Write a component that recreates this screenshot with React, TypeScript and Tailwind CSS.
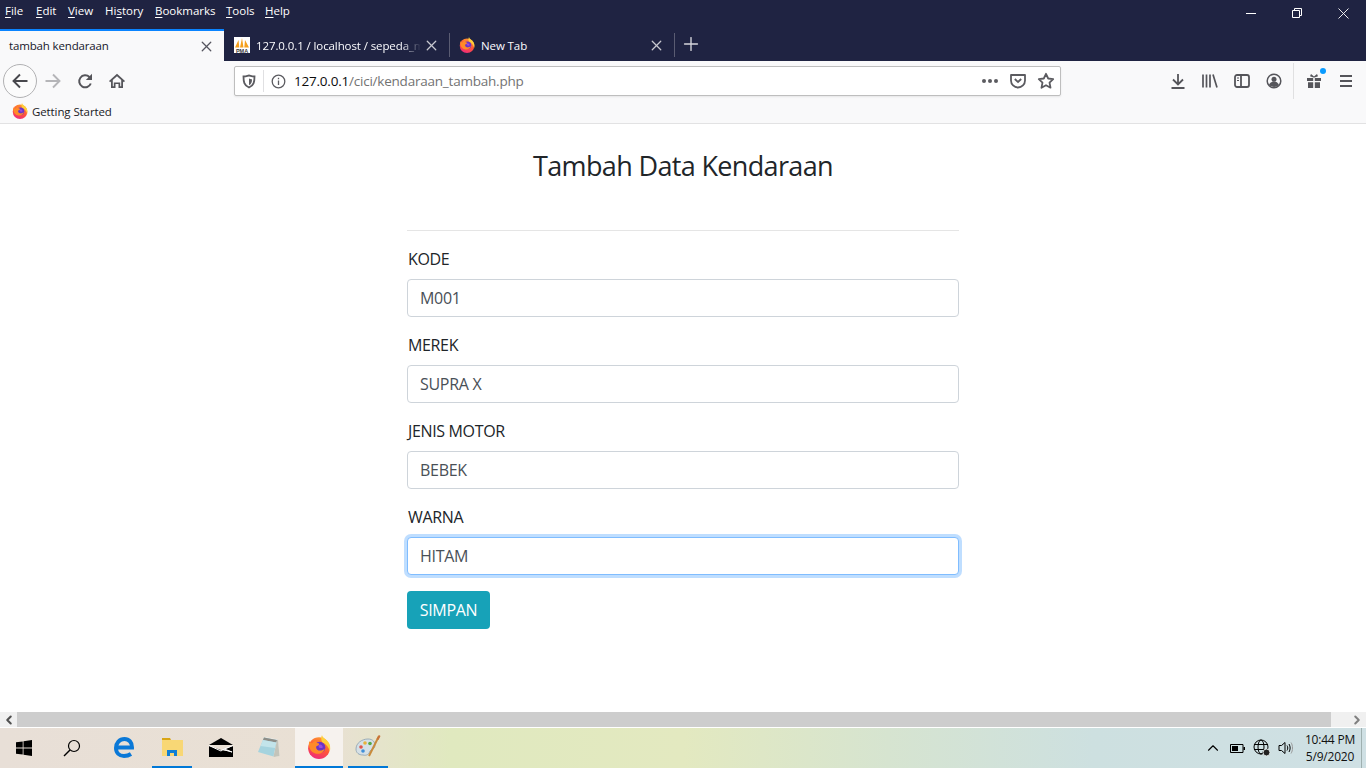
import { ChevronLeft, ChevronRight, ChevronUp, X, Plus } from 'lucide-react';

const menus = [
  { first: 'F', rest: 'ile', w: 'w-[31px]' },
  { first: 'E', rest: 'dit', w: 'w-[32px]' },
  { first: 'V', rest: 'iew', w: 'w-[37px]' },
  { first: '', rest: 'History', w: 'w-[50px]' },
  { first: 'B', rest: 'ookmarks', w: 'w-[71px]' },
  { first: 'T', rest: 'ools', w: 'w-[39px]' },
  { first: 'H', rest: 'elp', w: 'w-[30px]' },
];

const fields = [
  { label: 'KODE', value: 'M001' },
  { label: 'MEREK', value: 'SUPRA X' },
  { label: 'JENIS MOTOR', value: 'BEBEK' },
  { label: 'WARNA', value: 'HITAM', focused: true },
];

function FirefoxLogo({ size = 16 }: { size?: number }) {
  return (
    <svg width={size} height={size} viewBox="0 0 32 32">
      <defs>
        <linearGradient id="ffBody" x1="0.75" y1="0" x2="0.35" y2="1">
          <stop offset="0" stopColor="#ff9a2e" />
          <stop offset="0.55" stopColor="#ff5638" />
          <stop offset="1" stopColor="#ee2a7b" />
        </linearGradient>
      </defs>
      <circle cx="16" cy="17.500" r="14.500" fill="url(#ffBody)" />
      <path d="M20 0c.5 3.500 5 5 8 9 3 3.500 3.500 8 2.500 13-1.500-6-4.500-9.500-10-12-2-3.500-2-7-.5-10z" fill="#ffcf3a" />
      <circle cx="17" cy="16.500" r="7.500" fill="#6a35c7" />
      <path d="M3 8c1 2 2.500 3 4 3 1-1.500 3-3 5-3.500-.5 2 1 3 3 3.500 1.500.5 1.500 1.500.5 2.500l-3 1.500c-1 2 0 4.500 3 5.500 3 .8 6-.2 8-2.500-1 5.500-7 8.500-12.500 6.500C5.500 23.500 1 16 3 8z" fill="#ff8a28" />
      <path d="M17 12.500c2.500 0 4.500 2 3.800 4.500-1 .5-3.300.5-4.800-.5-1-1.500-.5-3.500 1-4z" fill="#9a4de0" />
    </svg>
  );
}

function PmaLogo() {
  return (
    <svg width="16" height="16" viewBox="0 0 16 16">
      <rect width="16" height="16" fill="#fff" />
      <path d="M1 10.500 4.500 3l.8 7.500zM6 10.500 8 1l1.500 9.500zM10.300 10.500 11 3l4 7.500z" fill="#f5a01c" />
      <text x="8" y="15.500" textAnchor="middle" fontSize="5.500" fontWeight="700" fill="#3a3a3a" fontFamily="Liberation Sans, sans-serif">PMA</text>
    </svg>
  );
}

function Tool({ className = '', children }: { className?: string; children: React.ReactNode }) {
  return <div className={`flex h-[32px] w-[32px] items-center justify-center ${className}`}>{children}</div>;
}

function TitleBar() {
  return (
    <div className="flex h-[29px] items-start bg-[#1f2342] pl-[1px] text-white">
      <div className="flex h-[21px] items-center text-[11.5px]">
        {menus.map(m => (
          <div key={m.rest} className={`${m.w} pl-[4px] leading-none whitespace-nowrap`}>
            {m.first && <span className="underline underline-offset-2">{m.first}</span>}
            {m.rest === 'History' ? (
              <>
                Hi<span className="underline underline-offset-2">s</span>tory
              </>
            ) : (
              m.rest
            )}
          </div>
        ))}
      </div>
      <div className="ml-auto flex h-[29px] items-center">
        <div className="flex w-[46px] justify-center pb-[3px]">
          <div className="h-[1px] w-[10px] bg-white" />
        </div>
        <div className="flex w-[46px] justify-center pb-[3px]">
          <svg width="10" height="10" viewBox="0 0 10 10" fill="none" stroke="#fff">
            <path d="M.5 2.500h7v7h-7zM2.500 2.500v-2h7v7h-2" />
          </svg>
        </div>
        <div className="flex w-[46px] justify-center pb-[3px]">
          <svg width="11" height="11" viewBox="0 0 11 11" stroke="#fff" strokeWidth="0.9">
            <path d="M.5.500l10 10M10.500.500l-10 10" />
          </svg>
        </div>
      </div>
    </div>
  );
}

function TabStrip() {
  return (
    <div className="flex h-[32px] bg-[#1f2342] text-[11.5px]">
      <div className="flex w-[224px] items-center justify-between border-t-2 border-[#0a84ff] bg-[#f9f9fa] pr-[9px] pl-[9px] text-[#17172b]">
        <span className="tracking-[-0.15px] whitespace-nowrap">tambah kendaraan</span>
        <X size={17} strokeWidth={1.800} className="text-[#55555f]" />
      </div>
      <div className="flex w-[225px] items-center pr-[9px] pl-[10px] text-[#fbfbfe]">
        <PmaLogo />
        <span className="mt-[2px] ml-[6px] w-[165px] tracking-[-0.1px] whitespace-nowrap [mask-image:linear-gradient(90deg,#000_88%,transparent)]">
          127.0.0.1 / localhost / sepeda_m
        </span>
        <X size={17} strokeWidth={1.800} className="ml-auto text-[#c8c8d0]" />
      </div>
      <div className="my-[4px] w-[1px] bg-[#5a5c72]" />
      <div className="flex w-[224px] items-center pr-[9px] pl-[9px] text-[#fbfbfe]">
        <FirefoxLogo />
        <span className="mt-[2px] ml-[6px] tracking-[-0.1px]">New Tab</span>
        <X size={17} strokeWidth={1.800} className="ml-auto text-[#c8c8d0]" />
      </div>
      <div className="my-[4px] w-[1px] bg-[#5a5c72]" />
      <div className="flex w-[32px] items-center justify-center pb-[2px]">
        <Plus size={22} strokeWidth={1.500} className="text-[#d6d6dc]" />
      </div>
    </div>
  );
}

function NavBar() {
  return (
    <div className="flex h-[40px] items-center bg-[#f9f9fa] pl-[3px] text-[#55555a]">
      <div className="flex h-[34px] w-[34px] items-center justify-center rounded-full border border-[#b1b1b3] bg-[#fbfbfb]">
        <svg width="18" height="18" viewBox="0 0 18 18" fill="none" stroke="#48484d" strokeWidth="1.900">
          <path d="M16.500 9H2.500M9 2.500 2.500 9 9 15.500" />
        </svg>
      </div>
      <div className="flex w-[32px] justify-center">
        <svg width="18" height="18" viewBox="0 0 18 18" fill="none" stroke="#b5b5b8" strokeWidth="1.900">
          <path d="M1.500 9h14M9 2.500 15.500 9 9 15.500" />
        </svg>
      </div>
      <Tool>
        <svg width="16" height="16" viewBox="0 0 16 16" fill="none" stroke="#55555a" strokeWidth="2">
          <path d="M13.800 10.500A6 6 0 1 1 12.400 4l1.600 1.400" />
          <path d="M15 .8v6.200H8.800z" fill="#55555a" stroke="none" />
        </svg>
      </Tool>
      <Tool>
        <svg width="16" height="16" viewBox="0 0 16 16" fill="#55555a">
          <path d="M8 .8 0 8l1.200 1.300L2 8.600V15h4.500v-4h3v4H14V8.600l.8.700L16 8zM12.200 13.300H11.200V9.500H4.800v3.800h-1V7L8 3.300 12.200 7z" />
        </svg>
      </Tool>
      <div className="ml-[101px] flex h-[30px] w-[827px] items-center rounded-[2px] border border-[#bebebe] bg-white shadow-[0_1px_2px_rgba(0,0,0,0.08)]">
        <div className="flex w-[28px] justify-center">
          <svg width="14" height="15" viewBox="0 0 14 15" fill="none" stroke="#5b5b60" strokeWidth="1.800">
            <path d="M1.500 2.500c3.500 0 4-1 5.500-1s2 1 5.500 1c0 5-.5 9-5.500 11C2 11.500 1.500 7.500 1.500 2.500z" />
            <path d="M7 4.500c1 .6 1.700.7 3 .8 0 2.700-.5 4.800-3 6z" fill="#5b5b60" stroke="none" />
          </svg>
        </div>
        <div className="h-[22px] w-[1px] bg-[#e0e0e2]" />
        <div className="flex w-[29px] justify-center">
          <svg width="15" height="15" viewBox="0 0 15 15" fill="none" stroke="#5b5b60" strokeWidth="1.300">
            <circle cx="7.500" cy="7.500" r="6.300" />
            <path d="M7.500 6.500v4.500M7.500 3.800v1.500" />
          </svg>
        </div>
        <div className="ml-[1px] text-[13.5px] tracking-[-0.22px] whitespace-nowrap">
          <span className="text-[#0c0c0d]">127.0.0.1</span>
          <span className="text-[#737373]">/cici/kendaraan_tambah.php</span>
        </div>
        <div className="ml-auto flex items-center pr-[5px]">
          <div className="mr-[12px] flex gap-[2px]">
            <div className="h-[4px] w-[4px] rounded-full bg-[#5b5b60]" />
            <div className="h-[4px] w-[4px] rounded-full bg-[#5b5b60]" />
            <div className="h-[4px] w-[4px] rounded-full bg-[#5b5b60]" />
          </div>
          <svg width="16" height="16" viewBox="0 0 16 16" fill="none" stroke="#5b5b60" strokeWidth="1.800">
            <path d="M1 2h14v5.500a7 7 0 0 1-14 0z" strokeLinejoin="round" />
            <path d="m4.800 6 3.200 3 3.200-3" />
          </svg>
          <svg width="18" height="18" viewBox="0 0 18 18" fill="none" stroke="#5b5b60" strokeWidth="1.800" className="ml-[11px]">
            <path d="m9 1.800 2.200 4.700 5 .6-3.700 3.500 1 5.100L9 13.200l-4.500 2.500 1-5.100L1.800 7.100l5-.6z" strokeLinejoin="round" />
          </svg>
        </div>
      </div>
      <div className="ml-[101px] flex items-center">
        <Tool>
          <svg width="16" height="16" viewBox="0 0 16 16" fill="none" stroke="#55555a" strokeWidth="1.800">
            <path d="M8 1v10M3 6.500l5 5 5-5M1.500 15h13" />
          </svg>
        </Tool>
        <Tool>
          <svg width="16" height="14" viewBox="0 0 16 14" fill="none" stroke="#55555a" strokeWidth="1.700">
            <path d="M1 .5v13M4.500.5v13M8 .5v13M11 .5l4 13" />
          </svg>
        </Tool>
        <Tool>
          <svg width="16" height="14" viewBox="0 0 16 14" fill="none" stroke="#55555a" strokeWidth="1.800">
            <rect x="1" y="1" width="14" height="12" rx="2" />
            <path d="M7 1v12" />
            <path d="M3 4h2M3 6.500h2" strokeWidth="1.200" />
          </svg>
        </Tool>
        <Tool>
          <svg width="16" height="16" viewBox="0 0 16 16" fill="none" stroke="#55555a" strokeWidth="1.500">
            <circle cx="8" cy="8" r="6.800" />
            <circle cx="8" cy="6.300" r="2.500" fill="#55555a" stroke="none" />
            <path d="M3 12c1-2.500 3-3.500 5-3.500s4 1 5 3.500c-2.500 2.500-7.500 2.500-10 0z" fill="#55555a" stroke="none" />
          </svg>
        </Tool>
        <div className="ml-[3px] h-[36px] w-[1px] bg-[#e0e0e1]" />
        <Tool className="relative ml-[4px]">
          <svg width="14" height="16" viewBox="0 0 14 16" fill="#55555a">
            <path d="M4 1 7 3.500 10 1l1 2.200-3.400 1.300H6.400L3 3.200zM0 5h6.200v3H0zM7.800 5H14v3H7.800zM1 9.300h5.200V15H1zM7.800 9.300H13V15H7.800z" />
          </svg>
          <div className="absolute top-[3px] right-[4px] h-[6px] w-[6px] rounded-full bg-[#0a9bff]" />
        </Tool>
        <Tool>
          <svg width="14" height="12" viewBox="0 0 14 12" stroke="#55555a" strokeWidth="1.800">
            <path d="M1 1h12M1 6h12M1 11h12" />
          </svg>
        </Tool>
      </div>
    </div>
  );
}

function BookmarkBar() {
  return (
    <div className="flex h-[23px] items-start border-b border-[#e2e2e3] bg-[#f9f9fa] pt-[2px] pl-[12px] text-[11.5px] text-[#1a1a1f]">
      <FirefoxLogo />
      <span className="ml-[4px] tracking-[-0.1px]">Getting Started</span>
    </div>
  );
}

function Field({ label, value, focused }: { label: string; value: string; focused?: boolean }) {
  return (
    <div className="mb-[16px]">
      <label className="mb-[8px] block pl-[1px] text-[16px] leading-[24px] tracking-[-0.35px] text-[#212529]">{label}</label>
      <div
        className={`flex h-[38px] items-center rounded-[4px] border bg-white px-[12px] text-[16px] tracking-[-0.3px] text-[#495057] ${
          focused ? 'border-[#80bdff] shadow-[0_0_0_3px_rgba(0,123,255,0.25)]' : 'border-[#ced4da]'
        }`}
      >
        {value}
      </div>
    </div>
  );
}

function TambahForm() {
  return (
    <div className="flex-1 overflow-hidden bg-white">
      <div className="mx-auto w-[552px]">
        <h3 className="mt-[25px] mb-[47px] text-center text-[27px] leading-[34px] tracking-[-0.65px] text-[#212529]">Tambah Data Kendaraan</h3>
        <div className="mb-[16px] h-[1px] bg-[#e5e5e5]" />
        {fields.map(f => (
          <Field key={f.label} {...f} />
        ))}
        <button className="flex h-[38px] w-[83px] items-center justify-center rounded-[4px] bg-[#17a2b8] text-[16px] tracking-[-0.35px] text-white">
          SIMPAN
        </button>
      </div>
    </div>
  );
}

function ScrollBar() {
  return (
    <div className="flex h-[16px] border-b border-white bg-[#cdcdcd]">
      <div className="flex w-[17px] items-center justify-center bg-[#f0f0f0]">
        <ChevronLeft size={14} strokeWidth={3.500} className="text-[#505050]" />
      </div>
      <div className="flex-1" />
      <div className="flex w-[35px] items-center justify-end bg-[#f0f0f0] pr-[2px]">
        <ChevronRight size={14} strokeWidth={3.500} className="text-[#808080]" />
      </div>
    </div>
  );
}

function TaskIcon({ w, active, lit, children }: { w: string; active?: boolean; lit?: boolean; children: React.ReactNode }) {
  return (
    <div className={`flex h-[40px] items-center justify-center border-b-2 ${w} ${active ? 'border-[#0078d7]' : 'border-transparent'} ${lit ? 'bg-[#f6f2ee]' : ''}`}>
      {children}
    </div>
  );
}

function TaskBar() {
  return (
    <div className="flex h-[40px] items-center bg-[linear-gradient(90deg,#e8dfd7_0%,#e9e0d4_24%,#e0e9bf_33%,#e3e9c0_50%,#d6e4d0_65%,#cde0e0_80%,#cfe0e4_100%)]">
      <div className="flex w-[48px] justify-center">
        <svg width="16" height="16" viewBox="0 0 16 16" fill="#000">
          <path d="M0 2.300 6.700 1.400v6.100H0zM7.500 1.300 16 0v7.500H7.500zM0 8.400h6.700v6.200L0 13.700zM7.500 8.400H16V16l-8.500-1.200z" />
        </svg>
      </div>
      <div className="flex w-[48px] justify-center">
        <svg width="18" height="18" viewBox="0 0 18 18" fill="none" stroke="#000" strokeWidth="1.200">
          <circle cx="11" cy="7" r="5.500" />
          <path d="M7 11 1 17" strokeWidth="1.500" />
        </svg>
      </div>
      <TaskIcon w="ml-[8px] w-[40px]">
        <svg width="22" height="22" viewBox="0 0 22 22" fill="none" stroke="#0a78d7" strokeWidth="4">
          <path d="M3 11.500h16c.2-5-3-8.500-7.500-8.500C6.500 3 3 7 3 12c0 5 3.500 8 8 8 3 0 5-.7 7-2" />
        </svg>
      </TaskIcon>
      <TaskIcon w="ml-[8px] w-[40px]" active>
        <svg width="22" height="20" viewBox="0 0 22 20">
          <path d="M1 1h8l1 2H1z" fill="#d9a514" />
          <path d="M1 3h21v16H1z" fill="#f8d775" />
          <path d="M6 19v-6h10v6h-3v-3H9v3z" fill="#0f7fd6" />
        </svg>
      </TaskIcon>
      <TaskIcon w="ml-[9px] w-[40px]">
        <svg width="24" height="19" viewBox="0 0 24 19" fill="#000">
          <path d="M0 7 12 0l12 7z" />
          <path d="M0 8v11h24V8L15 11.500 24 14 12 12z" />
          <path d="M0 7.500 12 13l2-1.500 9 2.500-7.500-3L24 7.500" fill="none" stroke="#fff" strokeWidth="1" />
        </svg>
      </TaskIcon>
      <TaskIcon w="ml-[8px] w-[40px]">
        <svg width="24" height="23" viewBox="0 0 24 23">
          <path d="M7.500 1 21 3.500 22.500 20 17 21z" fill="#f0f0ec" />
          <path d="M7 1.500 20 4l-3.500 16.500L1 16z" fill="#a5d3de" />
          <path d="M7 1.500 20 4l-.7 2.500L6 4z" fill="#8e8e88" />
          <path d="M6 4 19.300 6.500 18 12 3.500 10z" fill="#c3e4ea" />
          <path d="M17 21l5.500-1L21 3.500l-1 .5-3.500 16.500z" fill="#c4c4ba" />
        </svg>
      </TaskIcon>
      <TaskIcon w="ml-[6px] w-[48px]" active lit>
        <FirefoxLogo size={24} />
      </TaskIcon>
      <TaskIcon w="ml-[5px] w-[40px]" active>
        <svg width="26" height="24" viewBox="0 0 26 24">
          <path d="M1 14C1 8 7 4 13 4c5 0 7 3 7 7 0 3-4 3-5 5-1 3-3 5-7 4-4 0-7-2-7-6z" fill="#d5e0e6" stroke="#8aa0ae" strokeWidth="0.800" />
          <circle cx="6" cy="12" r="1.800" fill="#e0534a" />
          <circle cx="10" cy="8" r="1.800" fill="#e8b23a" />
          <circle cx="15" cy="8.500" r="1.800" fill="#55a845" />
          <circle cx="8" cy="16" r="1.800" fill="#3f8fd8" />
          <path d="M24 1 14 21" stroke="#c88a3a" strokeWidth="2" />
          <path d="M24 0l1.500 1-2 4-2-1z" fill="#c9733a" />
        </svg>
      </TaskIcon>
      <div className="ml-auto flex items-center">
        <ChevronUp size={18} strokeWidth={1.500} className="text-black" />
        <svg width="15" height="9" viewBox="0 0 15 9" className="ml-[8px]">
          <path d="M.5.500h12.500v8H.5z" fill="none" stroke="#000" />
          <path d="M2 2h6v5H2z" fill="#000" />
          <path d="M13.500 3H15v3h-1.500z" fill="#000" />
        </svg>
        <svg width="18" height="18" viewBox="0 0 18 18" fill="none" stroke="#000" strokeWidth="1" className="ml-[8px]">
          <circle cx="8" cy="8" r="7" />
          <ellipse cx="8" cy="8" rx="3" ry="7" />
          <path d="M1 5.500h14M1 10.500h14" />
          <circle cx="13.500" cy="13.500" r="3.500" fill="#222" stroke="#e0e8e8" />
        </svg>
        <svg width="16" height="14" viewBox="0 0 16 14" fill="none" stroke="#000" strokeWidth="1" className="ml-[7px]">
          <path d="M1 4.500h2.500L7 1.500v11l-3.500-3H1z" />
          <path d="M9 4.500c1 1.500 1 3.500 0 5M11 3c1.500 2.500 1.500 5.500 0 8" />
          <path d="M13 1.500c2 3 2 8 0 11" stroke="#999" />
        </svg>
        <div className="ml-[12px] flex w-[48px] flex-col items-center text-[12px] leading-[17px] tracking-[-0.2px] whitespace-nowrap text-[#111]">
          <span>10:44 PM</span>
          <span>5/9/2020</span>
        </div>
        <div className="ml-[7px] h-[40px] w-[1px] bg-[#9fb0b0]" />
        <div className="w-[4px]" />
      </div>
    </div>
  );
}

export default function App() {
  return (
    <div className="flex h-[768px] w-[1366px] flex-col overflow-hidden font-['Open_Sans','Noto_Sans',sans-serif]">
      <TitleBar />
      <TabStrip />
      <NavBar />
      <BookmarkBar />
      <TambahForm />
      <ScrollBar />
      <TaskBar />
    </div>
  );
}
